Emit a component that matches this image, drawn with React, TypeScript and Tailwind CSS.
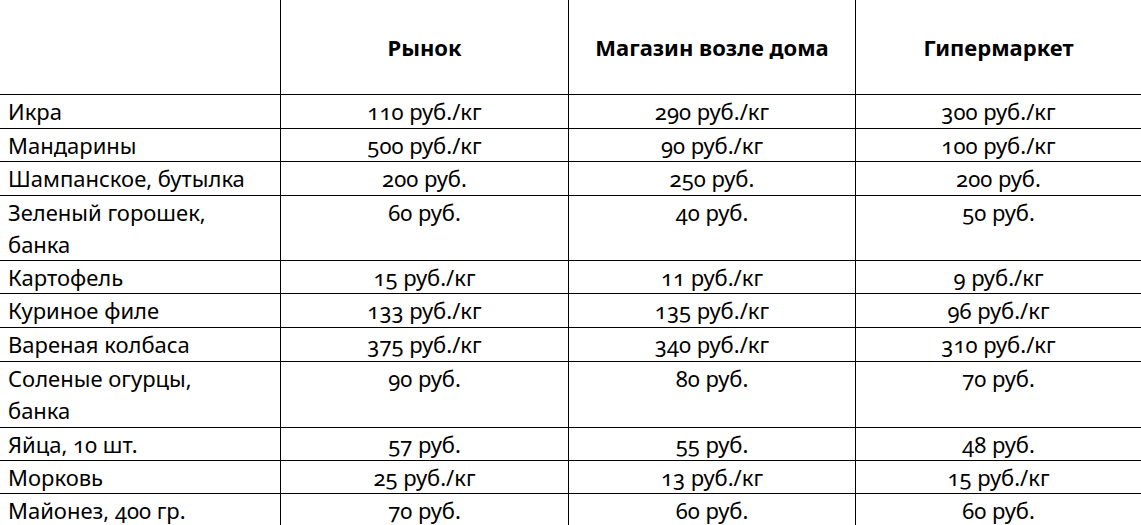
const rows = [
  { name: ["Икра"], market: "110 руб./кг", shop: "290 руб./кг", hyper: "300 руб./кг", h: "h-[34px]" },
  { name: ["Мандарины"], market: "500 руб./кг", shop: "90 руб./кг", hyper: "100 руб./кг", h: "h-[33px]" },
  { name: ["Шампанское, бутылка"], market: "200 руб.", shop: "250 руб.", hyper: "200 руб.", h: "h-[34px]" },
  { name: ["Зеленый горошек,", "банка"], market: "60 руб.", shop: "40 руб.", hyper: "50 руб.", h: "h-[65px]" },
  { name: ["Картофель"], market: "15 руб./кг", shop: "11 руб./кг", hyper: "9 руб./кг", h: "h-[33px]" },
  { name: ["Куриное филе"], market: "133 руб./кг", shop: "135 руб./кг", hyper: "96 руб./кг", h: "h-[34px]" },
  { name: ["Вареная колбаса"], market: "375 руб./кг", shop: "340 руб./кг", hyper: "310 руб./кг", h: "h-[34px]" },
  { name: ["Соленые огурцы,", "банка"], market: "90 руб.", shop: "80 руб.", hyper: "70 руб.", h: "h-[66px]" },
  { name: ["Яйца, 10 шт."], market: "57 руб.", shop: "55 руб.", hyper: "48 руб.", h: "h-[33px]" },
  { name: ["Морковь"], market: "25 руб./кг", shop: "13 руб./кг", hyper: "15 руб./кг", h: "h-[33px]" },
  { name: ["Майонез, 400 гр."], market: "70 руб.", shop: "60 руб.", hyper: "60 руб.", h: "h-[34px]" },
];

export default function App() {
  return (
    <div
      className="w-[1141px] h-[525px] overflow-hidden bg-white text-black text-[22px] oldstyle-nums"
      style={{ fontFamily: '"Noto Sans", sans-serif' }}
    >
      {/* Header */}
      <div className="flex h-[95px] border-b border-black font-bold">
        <div className="w-[281px] border-r border-black" />
        <div className="w-[288px] border-r border-black flex items-center justify-center">Рынок</div>
        <div className="w-[287px] border-r border-black flex items-center justify-center">
          Магазин возле дома
        </div>
        <div className="flex-1 flex items-center justify-center">Гипермаркет</div>
      </div>

      {rows.map((r, i) => (
        <div
          key={i}
          className={`flex ${r.h} ${i < rows.length - 1 ? "border-b" : ""} border-black leading-[32px]`}
        >
          <div className="w-[281px] border-r border-black pl-2">
            {r.name.map((line, j) => (
              <div key={j}>{line}</div>
            ))}
          </div>
          <div className="w-[288px] border-r border-black text-center">{r.market}</div>
          <div className="w-[287px] border-r border-black text-center">{r.shop}</div>
          <div className="flex-1 text-center">{r.hyper}</div>
        </div>
      ))}
    </div>
  );
}
